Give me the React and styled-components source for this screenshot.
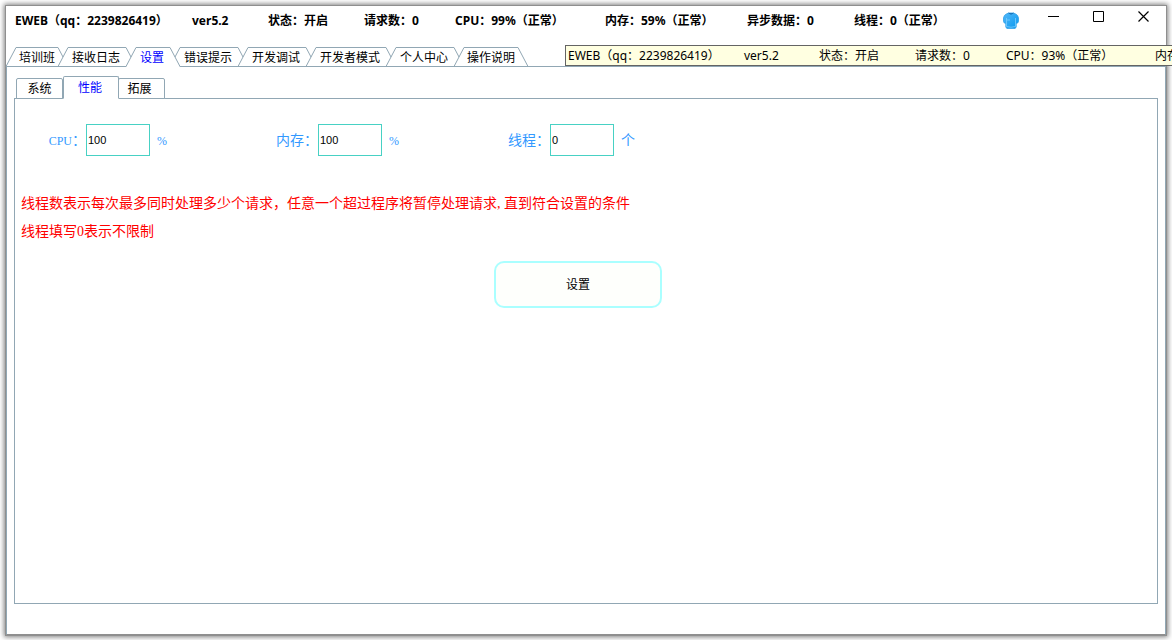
import React, { useState } from "react";
import styled, { createGlobalStyle, css } from "styled-components";

const LINE = "#91a7b4";

const GlobalStyle = createGlobalStyle`
  * { box-sizing: border-box; }
  body {
    margin: 0;
    background: #fff;
    color: #000;
    font: 12px/16px "Noto Sans", "Noto Sans CJK SC", sans-serif;
  }
  button, input { font: inherit; color: inherit; margin: 0; }
`;

const Page = styled.div`
  position: relative;
  min-height: 100vh;
  padding: 6px 6px 5px;
  display: flex;
  overflow: hidden;
`;

const Window = styled.main`
  flex: 1;
  min-width: 0;
  display: flex;
  flex-direction: column;
  background: #fff;
  box-shadow: 0 0 0 1px #8f8f8f, 0 0 5px 2px rgba(0, 0, 0, 0.5);
`;

const TitleBar = styled.header`
  display: flex;
  justify-content: space-between;
  height: 41px;
  flex: none;
`;

const StatusLine = styled.div`
  display: grid;
  grid-template-columns: ${(p) => p.$columns};
  white-space: nowrap;
  ${(p) => p.$bold && css`
    font-weight: 700;
    padding: 7px 0 0 9px;
    height: 24px;
  `}
`;

const Controls = styled.div`
  display: flex;
  align-items: flex-start;
`;

const ControlButton = styled.button`
  width: ${(p) => (p.$wide ? 45 : 40)}px;
  height: ${(p) => (p.$wide ? 20 : 28)}px;
  padding: 0;
  border: 0;
  background: none;
  display: flex;
  align-items: center;
  justify-content: center;
`;

const TopTabs = styled.nav`
  display: flex;
  height: 20px;
  margin-bottom: -1px;
  position: relative;
  flex: none;
`;

const TopTab = styled.button`
  height: 20px;
  padding: ${(p) => (p.$edge ? "1px 3px 0" : "1px 6px 0 4px")};
  border: 0;
  border-top: 1px solid ${LINE};
  border-bottom: 1px solid ${(p) => (p.$active ? "#fff" : LINE)};
  background: #fff;
  color: ${(p) => (p.$active ? "#00f" : "#000")};
  line-height: 17px;
  white-space: nowrap;
  flex: none;
`;

const SlopeArt = styled.svg`
  width: 10px;
  height: 20px;
  flex: none;
  display: block;
  overflow: visible;
`;

const TopPane = styled.section`
  flex: 1;
  display: flex;
  flex-direction: column;
  border: 1px solid ${LINE};
  border-bottom-color: #8f8f8f;
  padding: 9px 7px 30px;
`;

const SubTabs = styled.nav`
  display: flex;
  align-items: flex-end;
  height: 23px;
  padding-left: 2px;
  margin-bottom: -1px;
  position: relative;
`;

const SubTab = styled.button`
  width: 47px;
  height: 21px;
  padding: 0;
  border: 1px solid ${LINE};
  border-radius: 2px 2px 0 0;
  background: #fff;
  white-space: nowrap;
  &:last-child { padding-right: 4px; }
  ${(p) => p.$active && css`
    width: 56px;
    height: 23px;
    margin-right: -1px;
    padding-right: 2px;
    border-bottom-color: #fff;
    color: #00f;
    z-index: 1;
  `}
`;

const Panel = styled.form`
  flex: 1;
  border: 1px solid ${LINE};
  padding: 25px 6px;
  font: 14px/28px "Liberation Serif", "Noto Sans CJK SC", sans-serif;
`;

const Fields = styled.div`
  display: grid;
  grid-template-columns: repeat(3, 232px);
  padding-left: 23px;
  color: #3399ff;
`;

const Field = styled.div`
  display: flex;
  align-items: center;
  height: 32px;
  line-height: 30px;
`;

const FieldLabel = styled.label`
  width: 42px;
  padding-top: 2px;
  display: flex;
  justify-content: flex-end;
  white-space: nowrap;
`;

const Unit = styled.span`
  padding-top: 2px;
`;

const Latin = styled.span`
  font-size: 12px;
`;

const NumberBox = styled.input`
  width: 64px;
  height: 32px;
  margin-right: 7px;
  padding: 0 1px;
  border: 1px solid #48d1c4;
  border-radius: 0;
  outline: 0;
  background: #fff;
  color: #000;
  font: 11px "Liberation Sans", sans-serif;
`;

const Notes = styled.div`
  margin: 34px 0 15px;
  color: #f00;
`;

const Note = styled.p`
  margin: 0;
`;

const HalfCell = styled.span`
  display: inline-block;
  width: 7px;
`;

const ApplyButton = styled.button`
  display: block;
  width: 168px;
  height: 47px;
  margin-left: 473px;
  padding: 0 0 2px;
  border: 2px solid #aaffff;
  border-radius: 10px;
  background: #fefffc;
  color: #000;
  font: 12px "Noto Sans CJK SC", sans-serif;
`;

const Tooltip = styled.div`
  position: absolute;
  top: 45px;
  left: 565px;
  right: 0;
  height: 21px;
  padding: 2px 2px 0;
  border: 1px solid #646464;
  border-right: 0;
  background: #ffffe1;
  overflow: hidden;
`;

function Slope({ left, right, leftActive, rightActive }) {
  return (
    <SlopeArt viewBox="0 0 10 20" aria-hidden="true" fill="none" stroke={LINE}>
      <path d="M0 19.5H10" />
      {leftActive && <path d="M0 1L10 20H0Z" fill="#fff" stroke="none" />}
      {rightActive && <path d="M10 1L0 20H10Z" fill="#fff" stroke="none" />}
      {left && <path d={leftActive || !right ? "M0 .5L10 19.5" : "M0 .5L5 10"} />}
      {right && <path d={leftActive ? "M10 .5L5 10" : "M10 .5L0 19.5"} />}
    </SlopeArt>
  );
}

function ShirtIcon() {
  return (
    <svg width="16" height="17" viewBox="0 0 16 17" aria-hidden="true">
      <defs>
        <linearGradient id="shirt" x1="0" y1="0" x2="1" y2="1">
          <stop offset="0" stopColor="#54b8f8" />
          <stop offset="1" stopColor="#0798ef" />
        </linearGradient>
      </defs>
      <path d="M5.5 1H10.5L13 2.2Q15 3 15.5 6V9.5Q15 11.5 13.2 11.5V15L12.2 16.4H3.8L2.8 15V11.5Q1 11.5.5 9.5V6Q1 3 3 2.2Z" fill="url(#shirt)" stroke="#2f9fe8" strokeWidth=".8" />
      <path d="M3.5 6V14.5Q8 16 12.5 14.5V6M4 8H7" fill="none" stroke="#86d2ff" strokeWidth=".7" />
      <path d="M5.5 1Q8 3.4 10.5 1" fill="#1c7fc8" stroke="#176fb5" strokeWidth=".8" />
    </svg>
  );
}

const TABS = ["培训班", "接收日志", "设置", "错误提示", "开发调试", "开发者模式", "个人中心", "操作说明"];
const SUB_TABS = ["系统", "性能", "拓展"];

const TITLE_STATUS = ["EWEB（qq：2239826419）", "ver5.2", "状态：开启", "请求数：0", "CPU：99%（正常）", "内存：59%（正常）", "异步数据：0", "线程：0（正常）"];
const TIP_STATUS = ["EWEB（qq：2239826419）", "ver5.2", "状态：开启", "请求数：0", "CPU：93%（正常）", "内存"];

const FIELDS = [
  { id: "cpu", label: <><Latin>CPU</Latin>：</>, value: "100", unit: "%" },
  { id: "memory", label: "内存：", value: "100", unit: "%" },
  { id: "threads", label: "线程：", value: "0", unit: "个" },
];

export default function App() {
  const [tab, setTab] = useState(2);
  const [subTab, setSubTab] = useState(1);

  return (
    <Page>
      <GlobalStyle />
      <Window>
        <TitleBar>
          <StatusLine $bold $columns="177px 76px 96px 91px 150px 142px 107px auto">
            {TITLE_STATUS.map((t) => <span key={t}>{t}</span>)}
          </StatusLine>
          <Controls>
            <ControlButton aria-label="皮肤"><ShirtIcon /></ControlButton>
            <ControlButton $wide aria-label="最小化">
              <svg width="11" height="11" stroke="#000"><path d="M0 5.5H11" /></svg>
            </ControlButton>
            <ControlButton $wide aria-label="最大化">
              <svg width="11" height="11" stroke="#000" fill="none"><path d="M.5.5H10.5V10.5H.5Z" /></svg>
            </ControlButton>
            <ControlButton $wide aria-label="关闭">
              <svg width="11" height="11" stroke="#000" strokeWidth="1.2"><path d="M.5.5L10.5 10.5M10.5.5L.5 10.5" /></svg>
            </ControlButton>
          </Controls>
        </TitleBar>

        <TopTabs>
          <Slope right rightActive={tab === 0} />
          {TABS.map((name, i) => (
            <React.Fragment key={name}>
              <TopTab
                $active={i === tab}
                $edge={i === 0 || i === TABS.length - 1}
                onClick={() => setTab(i)}
              >
                {name}
              </TopTab>
              <Slope left right={i < TABS.length - 1} leftActive={i === tab} rightActive={i + 1 === tab} />
            </React.Fragment>
          ))}
        </TopTabs>

        <TopPane>
          <SubTabs>
            {SUB_TABS.map((name, i) => (
              <SubTab key={name} $active={i === subTab} onClick={() => setSubTab(i)}>{name}</SubTab>
            ))}
          </SubTabs>
          <Panel onSubmit={(e) => e.preventDefault()}>
            <Fields>
              {FIELDS.map((f) => (
                <Field key={f.id}>
                  <FieldLabel htmlFor={f.id}><span>{f.label}</span></FieldLabel>
                  <NumberBox id={f.id} type="text" defaultValue={f.value} />
                  <Unit>{f.unit === "%" ? <Latin>{f.unit}</Latin> : f.unit}</Unit>
                </Field>
              ))}
            </Fields>
            <Notes>
              <Note>线程数表示每次最多同时处理多少个请求，任意一个超过程序将暂停处理请求<HalfCell>,</HalfCell>直到符合设置的条件</Note>
              <Note>线程填写0表示不限制</Note>
            </Notes>
            <ApplyButton type="submit">设置</ApplyButton>
          </Panel>
        </TopPane>
      </Window>

      <Tooltip role="tooltip">
        <StatusLine $columns="176px 75px 96px 91px 149px auto">
          {TIP_STATUS.map((t) => <span key={t}>{t}</span>)}
        </StatusLine>
      </Tooltip>
    </Page>
  );
}
